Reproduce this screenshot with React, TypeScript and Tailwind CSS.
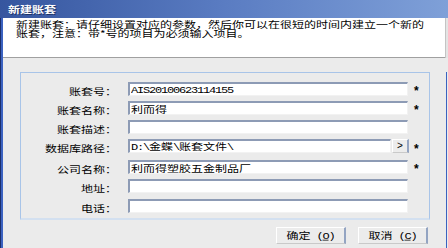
import React from "react";

const Mono = ({ children }: { children: React.ReactNode }) => (
  <span className="font-['Liberation_Mono',monospace] text-[12px] tracking-[-1.2px]">{children}</span>
);

const Txt = ({ children, className = "" }: { children: React.ReactNode; className?: string }) => (
  <span className={"inline-block scale-y-75 text-[12px] leading-[12px] whitespace-nowrap " + className}>{children}</span>
);

const Input = ({ w, children }: { w: string; children?: React.ReactNode }) => (
  <div
    className={
      "h-[14px] bg-white border-t-2 border-l-2 border-r border-b border-[#8d9bb5] border-r-[#f2f2f2] border-b-[#f2f2f2] flex items-center pl-[1px] overflow-hidden " +
      w
    }
  >
    {children ? <Txt>{children}</Txt> : null}
  </div>
);

const Star = () => (
  <span className="ml-[6px] font-['Liberation_Sans',sans-serif] font-bold text-[12px] leading-[12px] translate-y-[2px]">*</span>
);

const Row = ({
  label,
  mt,
  children,
}: {
  label: string;
  mt: string;
  children: React.ReactNode;
}) => (
  <div className={"flex items-center h-[14px] " + mt}>
    <div className="w-[96px] text-right">
      <Txt>{label}</Txt>
    </div>
    <div className="ml-[11px] flex items-center">{children}</div>
  </div>
);

const Btn = ({ text, k }: { text: string; k: string }) => (
  <div className="w-[70px] h-[17px] bg-[#ececec] border-t border-l border-white border-r-2 border-b border-r-[#93a4c2] border-b-[#c9c9c9] flex items-center justify-center">
    <Txt>
      {text}
      <Mono>
        {" ("}
        <span className="underline">{k}</span>
        {")"}
      </Mono>
    </Txt>
  </div>
);

export default function App() {
  return (
    <div className="w-[448px] h-[248px] flex flex-col bg-[#ebebeb] overflow-hidden font-['Noto_Sans_CJK_SC',sans-serif] text-black">
      <div className="h-[18px] shrink-0 bg-gradient-to-r from-[#36569f] via-[#5a7cc2] to-[#7fa0d8] flex items-center pl-[8px]">
        <span className="inline-block scale-y-75 text-white font-bold text-[12px] leading-[12px] [text-shadow:1px_1px_0_#1f3466]">
          新建账套
        </span>
      </div>
      <div className="flex flex-1">
        <div className="w-[3px] border-l border-[#1c2f6c] bg-[#3b62c0]" />
        <div className="w-[442px] flex flex-col">
          <div className="h-[40px] shrink-0 bg-white border-b border-[#a0a0a0] pl-[13px] pt-[2px]">
            <div className="origin-top scale-y-75 text-[12px] leading-[11px] whitespace-nowrap">
              <div>新建账套：请仔细设置对应的参数，然后你可以在很短的时间内建立一个新的</div>
              <div>账套，注意：带*号的项目为必须输入项目。</div>
            </div>
          </div>
          <div className="ml-[17px] mt-[14px] w-[410px] h-[148px] border-l border-t border-r border-b-2 border-[#a8c4e8] border-b-[#d3e0f0] pt-[9px]">
            <Row label="账套号：" mt="">
              <Input w="w-[280px]">
                <Mono>AIS20100623114155</Mono>
              </Input>
              <Star />
            </Row>
            <Row label="账套名称：" mt="mt-[5px]">
              <Input w="w-[280px]">利而得</Input>
              <Star />
            </Row>
            <Row label="账套描述：" mt="mt-[5px]">
              <Input w="w-[280px]" />
            </Row>
            <Row label="数据库路径：" mt="mt-[5px]">
              <Input w="w-[263px]">
                <Mono>D:\</Mono>金蝶<Mono>\</Mono>账套文件<Mono>\</Mono>
              </Input>
              <div className="ml-[1px] w-[17px] h-[14px] bg-[#ececec] border-t border-l border-white border-r-2 border-b border-r-[#93a4c2] border-b-[#c9c9c9] flex items-center justify-center">
                <span className="font-['Liberation_Sans',sans-serif] text-[10px] leading-[10px]">&gt;</span>
              </div>
              <span className="ml-[-1px]">
                <Star />
              </span>
            </Row>
            <Row label="公司名称：" mt="mt-[7px]">
              <Input w="w-[280px]">利而得塑胶五金制品厂</Input>
              <Star />
            </Row>
            <Row label="地址：" mt="mt-[5px]">
              <Input w="w-[280px]" />
            </Row>
            <Row label="电话：" mt="mt-[6px]">
              <Input w="w-[280px]" />
            </Row>
          </div>
          <div className="mt-[7px] flex justify-end gap-[12px] pr-[17px]">
            <Btn text="确定" k="O" />
            <Btn text="取消" k="C" />
          </div>
        </div>
        <div className="w-[3px] flex flex-col">
          <div className="h-[40px] border-l border-[#c4c4c4] bg-[#e4e4e4]" />
          <div className="h-[14px]" />
          <div className="flex-1 ml-[1px] w-[1px] bg-[#3b62c0]" />
        </div>
      </div>
    </div>
  );
}
